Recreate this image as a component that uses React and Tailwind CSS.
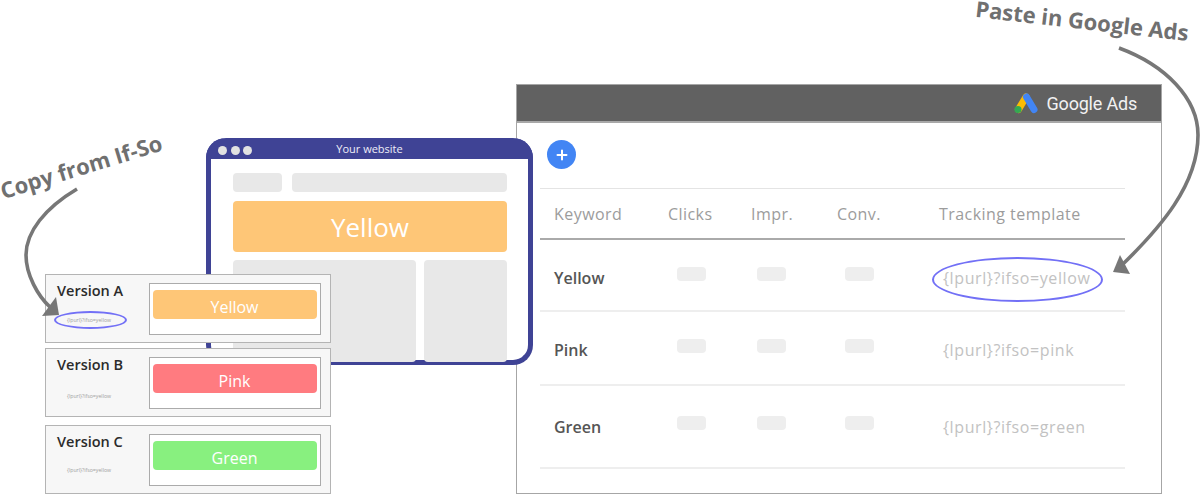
import React from "react";

const rows = [
  { name: "Yellow", tpl: "{lpurl}?ifso=yellow", cls: "h-[72px]", pill: "pt-[27px]", text: "pt-[26px]", oval: true },
  { name: "Pink", tpl: "{lpurl}?ifso=pink", cls: "h-[74px]", pill: "pt-[27px]", text: "pt-[26px]" },
  { name: "Green", tpl: "{lpurl}?ifso=green", cls: "h-[83px]", pill: "pt-[30px]", text: "pt-[29px]" },
];

const cols = "grid grid-cols-[114px_83px_86px_102px_1fr] px-[14px]";

function Pill({ cls }) {
  return <div className={`h-[14px] w-[29px] rounded-[4px] bg-[#eeeeee] ${cls}`} />;
}

function GoogleAdsLogo() {
  return (
    <svg width="24" height="21" viewBox="0 0 24 21" className="mr-[9px] mt-[1px]">
      <path d="M12 4 L4.5 16.5" stroke="#fbbc04" strokeWidth="7" strokeLinecap="round" />
      <path d="M12.5 4 L20 16.5" stroke="#4285f4" strokeWidth="7" strokeLinecap="round" />
      <circle cx="4" cy="16.5" r="3.6" fill="#34a853" />
    </svg>
  );
}

function AdsPanel() {
  return (
    <div className="absolute left-[516px] top-[84px] flex h-[410px] w-[646px] flex-col border border-[#a6a6a6] bg-white">
      <div className="flex h-[38px] shrink-0 items-center justify-end border-b-2 border-[#a8a8a8] bg-[#616161] pr-[24px]">
        <GoogleAdsLogo />
        <span className="mt-[2px] font-['Roboto'] text-[18px] font-normal leading-none tracking-[-0.2px] text-[#f2f2f2]">Google Ads</span>
      </div>
      <div className="ml-[23px] w-[585px]">
        <div className="flex h-[65px] items-start pt-[17px] pl-[7px]">
          <div className="flex h-[29px] w-[29px] items-center justify-center rounded-full bg-[#4285f4]">
            <svg width="12" height="12" viewBox="0 0 12 12">
              <path d="M6 1.5v9M1.5 6h9" stroke="#fff" strokeWidth="2" strokeLinecap="round" />
            </svg>
          </div>
        </div>
        <div className={`${cols} h-[52px] items-center border-t border-b-2 border-t-[#e4e4e4] border-b-[#aaaaaa] text-[16px] leading-none tracking-[0.45px] text-[#9c9c9c]`}>
          <span>Keyword</span>
          <span>Clicks</span>
          <span>Impr.</span>
          <span>Conv.</span>
          <span>Tracking template</span>
        </div>
        {rows.map((r) => (
          <div key={r.name} className={`${cols} border-b-2 border-[#eeeeee] ${r.cls}`}>
            <span className={`text-[16px] font-semibold leading-[24px] text-[#555555] ${r.text}`}>{r.name}</span>
            <div className={r.pill}><Pill cls="ml-[9px]" /></div>
            <div className={r.pill}><Pill cls="ml-[6px]" /></div>
            <div className={r.pill}><Pill cls="ml-[8px]" /></div>
            <div className={`relative text-[16px] leading-[24px] tracking-[0.6px] text-[#c2c2c2] ${r.text}`}>
              <span className="ml-[4px]">{r.tpl}</span>
              {r.oval && (
                <div className="absolute left-[-7px] top-[17px] h-[45px] w-[171px] rounded-[50%] border-[2.5px] border-[#7270f6]" />
              )}
            </div>
          </div>
        ))}
      </div>
    </div>
  );
}

function Website() {
  return (
    <div className="absolute left-[206px] top-[138px] flex h-[227px] w-[327px] flex-col rounded-[20px] border-x-[5px] border-b-[5px] border-[#3f4395] bg-white">
      <div className="-mx-[5px] relative flex h-[21px] shrink-0 items-center rounded-t-[20px] bg-[#3f4395] pl-[12px]">
        <div className="flex gap-[3.5px] pt-[4px]">
          <span className="h-[9px] w-[9px] rounded-full bg-[#e2e2e2]" />
          <span className="h-[9px] w-[9px] rounded-full bg-[#e2e2e2]" />
          <span className="h-[9px] w-[9px] rounded-full bg-[#e2e2e2]" />
        </div>
        <span className="absolute inset-x-0 top-[3px] text-center text-[11px] leading-[15px] text-[#eeeef8]">Your website</span>
      </div>
      <div className="flex flex-col gap-[9px] pl-[22px] pr-[21px] pt-[14px]">
        <div className="flex gap-[10px]">
          <div className="h-[19px] w-[49px] rounded-[4px] bg-[#e8e8e8]" />
          <div className="h-[19px] flex-1 rounded-[4px] bg-[#e8e8e8]" />
        </div>
        <div className="flex h-[51px] items-center justify-center rounded-[4px] bg-[#fec677] pt-[2px] text-[26px] font-medium text-white">Yellow</div>
        <div className="-mt-[1px] flex gap-[8px]">
          <div className="h-[102px] w-[183px] rounded-[4px] bg-[#e8e8e8]" />
          <div className="h-[102px] flex-1 rounded-[4px] bg-[#e8e8e8]" />
        </div>
      </div>
    </div>
  );
}

function VersionCard({ title, label, btn, cls, small, oval }) {
  return (
    <div className={`flex h-[69px] border-[1.5px] border-[#b4b4b4] bg-[#f7f7f7] ${cls}`}>
      <div className="w-[102px] shrink-0 pl-[11px] pt-[6px]">
        <div className="text-[14.5px] font-semibold leading-[19px] text-[#2b2b2b]">{title}</div>
        <div className={`relative ml-[10px] whitespace-nowrap text-[5.2px] leading-[8px] text-[#a0a0a0] ${small}`}>
          {"{lpurl}?ifso=yellow"}
          {oval && <div className="absolute left-[-13px] top-[-5px] h-[18px] w-[73px] rounded-[50%] border-[2.5px] border-[#7270f6]" />}
        </div>
      </div>
      <div className="ml-[0.5px] mt-[8px] h-[52px] w-[172px] border border-[#ababab] bg-white px-[3px] pt-[6px]">
        <div className={`flex h-[29px] items-center justify-center rounded-[4px] pt-[4px] text-[16px] font-medium leading-none text-white ${btn}`}>{label}</div>
      </div>
    </div>
  );
}

export default function App() {
  return (
    <div className="relative h-[494px] w-[1200px] overflow-hidden bg-white font-['Open_Sans',sans-serif]">
      <AdsPanel />
      <Website />
      <div className="absolute left-[45px] top-[274px] flex w-[286px] flex-col">
        <VersionCard title="Version A" label="Yellow" btn="bg-[#fec677]" small="mt-[16px]" oval />
        <VersionCard title="Version B" label="Pink" btn="bg-[#ff7b80]" cls="mt-[5px]" small="mt-[18px]" />
        <VersionCard title="Version C" label="Green" btn="bg-[#88f07f]" cls="mt-[8px]" small="mt-[15px]" />
      </div>

      <span className="absolute left-[-3px] top-[158px] origin-center rotate-[-17deg] whitespace-nowrap text-[22px] font-bold leading-[16px] text-[#707070]">Copy from If-So</span>
      <span className="absolute left-[975px] top-[12px] origin-center rotate-[6.5deg] whitespace-nowrap text-[22px] font-bold leading-[16px] text-[#707070]">Paste in Google Ads</span>

      <svg className="pointer-events-none absolute left-0 top-0" width="1200" height="494" viewBox="0 0 1200 494" fill="none">
        <path d="M77 189 C45 208 26 232 26 255 C26 275 38 296 50 307" stroke="#777777" strokeWidth="3.6" />
        <path d="M56 297 L59 315 L42 316 Z" fill="#777777" />
        <path d="M1119 48 C1165 65 1198 98 1198 135 C1198 185 1160 228 1122 265" stroke="#777777" strokeWidth="3.6" />
        <path d="M1113 272 L1120 255 L1130 274 Z" fill="#777777" />
      </svg>
    </div>
  );
}
